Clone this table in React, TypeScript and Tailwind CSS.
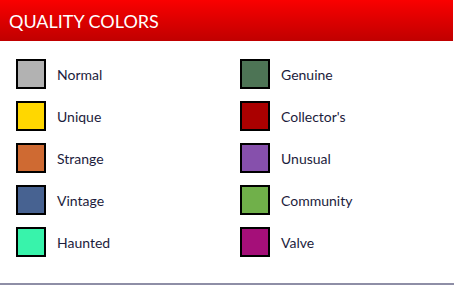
import React from 'react';

type Quality = { name: string; color: string };

const qualities: Quality[] = [
  { name: "Normal", color: "#b2b2b2" },
  { name: "Genuine", color: "#4d7455" },
  { name: "Unique", color: "#ffd700" },
  { name: "Collector's", color: "#aa0000" },
  { name: "Strange", color: "#cf6a32" },
  { name: "Unusual", color: "#8650ac" },
  { name: "Vintage", color: "#476291" },
  { name: "Community", color: "#70b04a" },
  { name: "Haunted", color: "#38f3ab" },
  { name: "Valve", color: "#a50f79" },
];

const App = () => {
  return (
    <div className="w-[454px] h-[285px] bg-white font-['Lato',sans-serif] flex flex-col">
      <div className="h-[41px] w-[453px] bg-gradient-to-b from-[#fa0000] to-[#c00000] flex items-center pl-[9px]">
        <span className="text-white text-[18px] leading-none">QUALITY COLORS</span>
      </div>
      <div className="grid grid-cols-[224px_224px] gap-y-[12px] pl-4 pt-[18px]">
        {qualities.map((q) => (
          <div key={q.name} className="flex items-center h-[30px]">
            <div
              className="w-[30px] h-[30px] border-2 border-black box-border"
              style={{ backgroundColor: q.color }}
            />
            <span className="ml-[11px] text-[14px] text-[#1c1c3c]">{q.name}</span>
          </div>
        ))}
      </div>
      <div className="flex-1" />
      <div className="h-[2px] bg-[#8e8ea6]" />
    </div>
  );
};

export default App;
